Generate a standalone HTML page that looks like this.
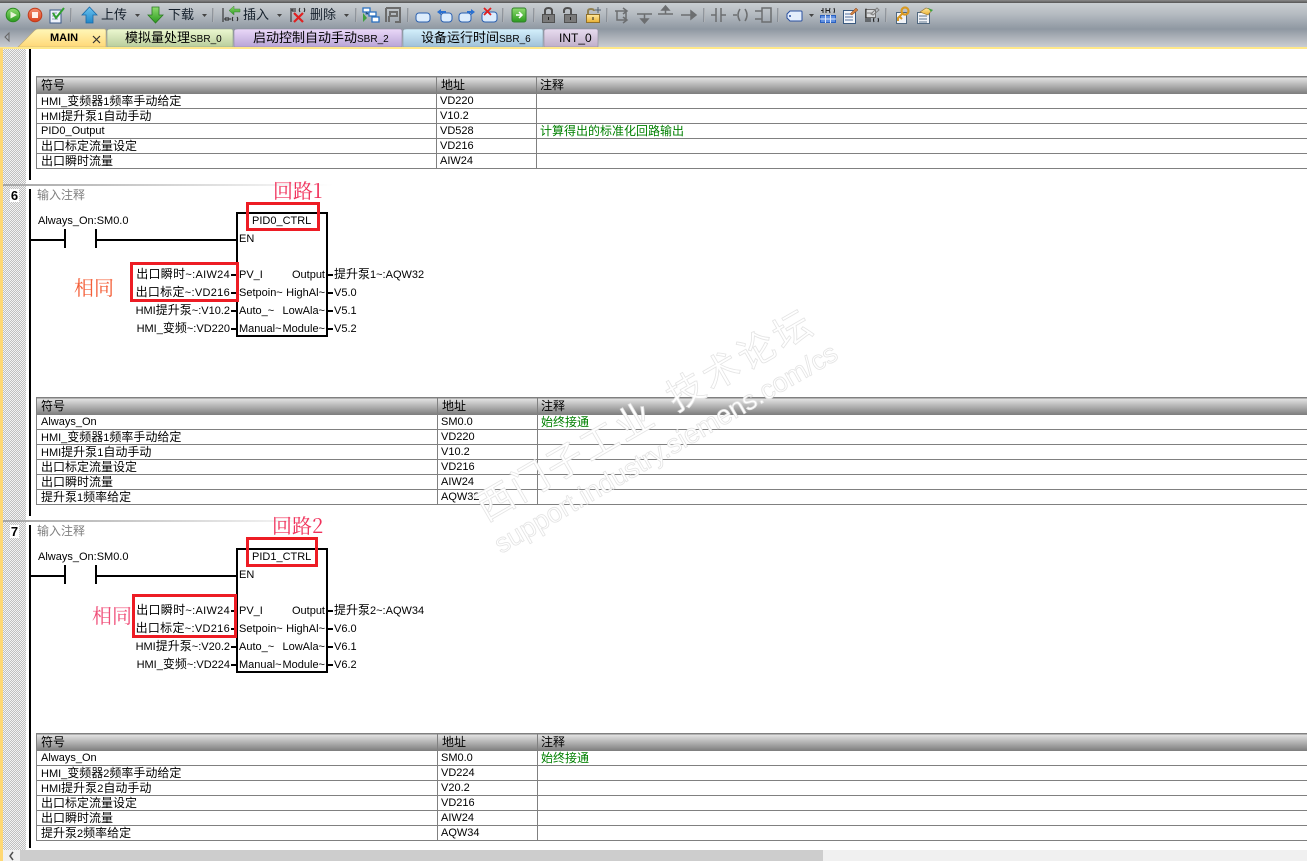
<!DOCTYPE html>
<html><head><meta charset="utf-8">
<style>
html,body{margin:0;padding:0;background:#fff}
body{width:1307px;height:861px;overflow:hidden;position:relative;font:11px/14px "Liberation Sans","WenQuanYi Zen Hei","Noto Sans CJK SC",sans-serif;color:#000}
em{font-style:normal;font-size:12px;line-height:12px;font-family:"WenQuanYi Zen Hei","Noto Sans CJK SC",sans-serif}
.a{position:absolute}
.l{position:absolute;white-space:nowrap;line-height:14px}
.r{position:absolute;white-space:nowrap;line-height:14px;right:1077px}
.o{position:absolute;white-space:nowrap;line-height:14px;right:982px}
#tb{left:0;top:0;width:1307px;height:47px;background:linear-gradient(#c9ced2 3px,#b5bbc1 14px,#8f98a2 29px,#b4b9bf 40px,#cbced2 47px)}
#tb0{left:0;top:0;width:1307px;height:3px;background:linear-gradient(#8a8a8a,#555)}
#yl{left:0;top:47px;width:1307px;height:2px;background:#ffe88a}
#ys{left:0;top:48px;width:3px;height:813px;background:#ffd873}
#ht{left:3px;top:49px;width:23px;height:801px;background:repeating-conic-gradient(#c0c0c0 0 25%,#f4f4f4 0 50%) 0 0/2px 2px}
.rail{position:absolute;left:29px;width:2px;background:#000}
.sep{position:absolute;left:3px;width:330px;height:2px;background:linear-gradient(90deg,#a6a6a6,#c8c8c8 120px,#fff)}
.num{position:absolute;left:10px;width:9px;text-align:center;font-weight:bold;font-size:13px;background:#fff;line-height:13px}
table{position:absolute;border-collapse:collapse;table-layout:fixed;width:1400px}
td,th{border:1px solid #808080;padding:0 0 0 4px;font-weight:normal;text-align:left;line-height:12px;white-space:nowrap;overflow:hidden;box-sizing:content-box;vertical-align:middle}
td{height:14px}
td+td{padding-left:3px}
th{height:16px;background:linear-gradient(#e4e4e4,#808080)}
th+th+th{padding-left:3px}
.g{color:#008000}
.b{position:absolute;background:#000}
.red{position:absolute;border:3px solid #ed1c24;box-sizing:border-box}
.big{position:absolute;white-space:nowrap;font:20px/24px "Noto Serif CJK SC","Liberation Serif",serif}
#wm{position:absolute;left:0;top:0;pointer-events:none}
</style></head><body>
<div class="a" id="tb"></div><div class="a" id="tb0"></div>

<svg class="a" style="left:0;top:0" width="1307" height="48" xmlns="http://www.w3.org/2000/svg">
<defs>
<linearGradient id="gr" x1="0" y1="0" x2="0" y2="1"><stop offset="0" stop-color="#8fdc70"/><stop offset="1" stop-color="#2a9a1e"/></linearGradient>
<linearGradient id="rd" x1="0" y1="0" x2="0" y2="1"><stop offset="0" stop-color="#f49070"/><stop offset="1" stop-color="#d8401a"/></linearGradient>
<linearGradient id="bl" x1="0" y1="0" x2="0" y2="1"><stop offset="0" stop-color="#6cc4f0"/><stop offset="1" stop-color="#1f86c8"/></linearGradient>
<linearGradient id="gd" x1="0" y1="0" x2="0" y2="1"><stop offset="0" stop-color="#ffe9a0"/><stop offset="1" stop-color="#e8b030"/></linearGradient>
<linearGradient id="t1" x1="0" y1="0" x2="0" y2="1"><stop offset="0" stop-color="#fff7b8"/><stop offset="1" stop-color="#ffd877"/></linearGradient>
<linearGradient id="t2" x1="0" y1="0" x2="0" y2="1"><stop offset="0" stop-color="#ecf8d0"/><stop offset="1" stop-color="#b9cd9c"/></linearGradient>
<linearGradient id="t3" x1="0" y1="0" x2="0" y2="1"><stop offset="0" stop-color="#ead8f8"/><stop offset="1" stop-color="#b8a4d6"/></linearGradient>
<linearGradient id="t4" x1="0" y1="0" x2="0" y2="1"><stop offset="0" stop-color="#d4f0fc"/><stop offset="1" stop-color="#a0c0d8"/></linearGradient>
<linearGradient id="t5" x1="0" y1="0" x2="0" y2="1"><stop offset="0" stop-color="#e8dcf0"/><stop offset="1" stop-color="#bfaec8"/></linearGradient>
</defs>
<!-- tabs -->
<path d="M9 33v8l-4-4z" fill="none" stroke="#666"/>
<path d="M18 47L34 31q2-2 4-2H104q2 0 2 2V47Z" fill="url(#t1)" stroke="#b8a878" stroke-width=".6"/>
<path d="M107 47V31q0-2 4-2H231q2 0 2 2V47Z" fill="url(#t2)" stroke="#8a9a8a" stroke-width=".6"/>
<path d="M234 47V31q0-2 4-2H400q2 0 2 2V47Z" fill="url(#t3)" stroke="#8a8a9a" stroke-width=".6"/>
<path d="M403 47V31q0-2 4-2H541q2 0 2 2V47Z" fill="url(#t4)" stroke="#8a9aa8" stroke-width=".6"/>
<path d="M544 47V31q0-2 4-2H596q2 0 2 2V47Z" fill="url(#t5)" stroke="#8a8a9a" stroke-width=".6"/>
<path d="M93 36l7 7M100 36l-7 7" stroke="#333" stroke-width="1.2"/>
<!-- run stop doc -->
<circle cx="13" cy="15" r="6.8" fill="url(#gr)" stroke="#2a8a20"/><path d="M10.5 11.5L17 15l-6.500 3.500z" fill="#e8f4d8"/>
<circle cx="35" cy="15" r="6.8" fill="url(#rd)" stroke="#c03a1a"/><rect x="32" y="12" width="6" height="6" fill="#fff0e8"/>
<rect x="50" y="10" width="11" height="13" fill="#eef2fa" stroke="#3c5a88"/><path d="M52 13h5M52 16h6M52 19h6" stroke="#8a9ab8"/><path d="M53 13l3 5 8-10" fill="none" stroke="#30a030" stroke-width="2"/>
<!-- separators -->
<g stroke="#f4f4f4" stroke-width="1"><path d="M71.500 8v14M213.500 8v14M356.500 8v14M408.500 8v14M503.500 8v14M534.500 8v14M607.500 8v14M704.500 8v14M778.500 8v14M886.500 8v14"/></g>
<g stroke="#6a7078" stroke-width="1"><path d="M71 8v14M213 8v14M356 8v14M408 8v14M503 8v14M534 8v14M607 8v14M704 8v14M778 8v14M886 8v14"/></g>
<!-- up/down -->
<path d="M89.500 7L97 15h-4v8h-7v-8h-4z" fill="url(#bl)" stroke="#1a6aa8" stroke-width=".8"/>
<path d="M152 7h7v8h4l-7.500 8-7.500-8h4z" fill="url(#gr)" stroke="#2a7a20" stroke-width=".8"/>
<!-- dropdown arrows -->
<g fill="#444"><path d="M135 14h5l-2.500 3zM202 14h5l-2.500 3zM277 14h5l-2.500 3zM344 14h5l-2.500 3zM809 14h5l-2.500 3z"/></g>
<!-- insert -->
<path d="M223 8v14" stroke="#222"/><path d="M226 17v4M228 17v4M226 19h-2M228 19h3M233 17q-1.500 2 0 4M237 17q1.500 2 0 4" stroke="#222" fill="none"/>
<path d="M240 9h-6V6l-5 4.500 5 4.500v-3h6z" fill="url(#gr)" stroke="#40803a" stroke-width=".5"/>
<!-- delete -->
<path d="M291 8v14" stroke="#222"/><path d="M293 8v4M295 8v4M293 10h-2M300 8q-1.500 2 0 4M304 8q1.500 2 0 4" stroke="#222" fill="none"/>
<path d="M294 13l9 9M303 13l-9 9" stroke="#e02020" stroke-width="2.200"/>
<!-- network icons -->
<path d="M363 8h7v4h-7zM369 12h7v4h-7zM372 17h7v5h-7z" fill="#fff" stroke="#2a70c0" stroke-width="1.300"/><path d="M363 13v9l4-4z" fill="#40a040"/><path d="M366 12v2h3M375 16v1" stroke="#2a70c0"/>
<path d="M386 8h14v14h-5M390 12h7v4h-7zM386 8v14M389 16v6" fill="none" stroke="#6c6c6c" stroke-width="2"/>
<!-- blue shapes -->
<rect x="416" y="13" width="14" height="9" rx="3" fill="#dcecfc" stroke="#2a60b0"/>
<rect x="441" y="13" width="11" height="9" rx="3" fill="#dcecfc" stroke="#2a60b0"/><path d="M446 11h-5V9l-4 3 4 3v-2h5z" fill="#2a70d0"/>
<rect x="459" y="13" width="12" height="9" rx="3" fill="#dcecfc" stroke="#2a60b0"/><path d="M467 11h4V9l4 3-4 3v-2h-4z" fill="#2a70d0"/>
<rect x="482" y="12" width="15" height="10" rx="3" fill="#dcecfc" stroke="#2a60b0"/><path d="M484 8l7 7M491 8l-7 7" stroke="#e02020" stroke-width="1.800"/>
<!-- green go -->
<rect x="512" y="8" width="14" height="14" rx="2" fill="url(#gr)" stroke="#30802a"/><path d="M516 15h5M519 12l3 3-3 3" stroke="#fff" stroke-width="1.500" fill="none"/>
<!-- locks -->
<g fill="#7a7a7a" stroke="#505050"><rect x="542.500" y="14.500" width="12" height="8"/><rect x="564.500" y="14.500" width="12" height="8"/></g>
<path d="M545 14v-3q0-3 3.500-3t3.500 3v3" fill="none" stroke="#505050" stroke-width="2"/>
<path d="M564 13v-2q0-3 3.500-3t3.500 2v4" fill="none" stroke="#505050" stroke-width="2"/>
<rect x="586.500" y="14.500" width="13" height="8" fill="url(#gd)" stroke="#90702a"/><path d="M588 14v-3q0-2 3-2t3 2" fill="none" stroke="#908050" stroke-width="2"/><path d="M598 7v6M595 10h6" stroke="#506070"/>
<path d="M548.500 17v3M570.500 17v3M593 17v3" stroke="#222"/>
<!-- gray ladder tools -->
<g stroke="#6c6e70" stroke-width="1.500" fill="none">
<path d="M615 11h11v9h-9v-9M623 8l4 3-4 3M623 17l4 3-4 3"/>
<path d="M637 14h15M644.500 14v6"/><path d="M641 19h7l-3.500 4z" fill="#6c6e70"/>
<path d="M658 14h15M665.500 14v-5"/><path d="M662 10h7l-3.500-4z" fill="#6c6e70"/>
<path d="M681 15h12"/><path d="M691 11l5 4-5 4z" fill="#6c6e70"/>
<path d="M711 15h5M716 8v14M721 8v14M721 15h5"/>
<path d="M733 15h4M740 9q-4 6 0 12M745 9q4 6 0 12"/>
<path d="M755 11h7M762 8h9v14h-9zM755 19h7"/>
</g>
<!-- tag -->
<path d="M790 11h11q1 0 1 1v8q0 1-1 1h-11l-3-3v-4z" fill="#e4eefc" stroke="#2a50a0"/><circle cx="790" cy="16" r="1" fill="#2a50a0"/>
<!-- table -->
<path d="M823 8v5M826 8v5M821 10.500h2M826 10.500h3M830 8q-1 2.500 0 5M834 8q1 2.500 0 5" stroke="#222" fill="none"/>
<rect x="820.500" y="15.500" width="15" height="7" fill="#6090e0" stroke="#2a60c0"/><path d="M825.500 15v8M830.500 15v8M820 19h16" stroke="#e0e8f8"/>
<!-- notes -->
<rect x="843.500" y="10.500" width="12" height="13" fill="#f4f6fa" stroke="#3a5a80"/><path d="M845 14h6M845 17h8M845 20h8" stroke="#5070a0"/><path d="M850 14l6-6 2 2-6 5z" fill="#d08040" stroke="#804020" stroke-width=".5"/>
<rect x="865.500" y="9.500" width="10" height="8" fill="#d8dadc" stroke="#707070"/><path d="M866 8v14M867 13h6M871 14l6-6 2 2-6 5z" stroke="#808080" fill="none"/><path d="M866 9v13M868 18v4M870 18v4M874 18q-1 2 0 4M878 18q1 2 0 4" stroke="#222" fill="none"/>
<rect x="896.500" y="12.500" width="10" height="11" fill="#f0f2f6" stroke="#506880"/><circle cx="905" cy="11" r="3.500" fill="none" stroke="#d89820" stroke-width="2.200"/><path d="M903 13l-5 5v3M900 17l2 2" stroke="#d89820" stroke-width="2" fill="none"/>
<rect x="917.500" y="12.500" width="12" height="11" fill="#f0f2f6" stroke="#506880"/><path d="M919 16h8M919 19h8M919 22h8" stroke="#607890"/><path d="M920 12l6-4 6 2-4 5z" fill="url(#gd)" stroke="#907030" stroke-width=".6"/><path d="M928 8l5 2-2 2z" fill="#40a040"/>
</svg>
<div class="l" style="left:101px;top:8px;font-size:13px;color:#15202c"><em style="font-size:13px">上传</em></div>
<div class="l" style="left:168px;top:8px;font-size:13px;color:#15202c"><em style="font-size:13px">下载</em></div>
<div class="l" style="left:243px;top:8px;font-size:13px;color:#15202c"><em style="font-size:13px">插入</em></div>
<div class="l" style="left:310px;top:8px;font-size:13px;color:#15202c"><em style="font-size:13px">删除</em></div>
<div class="l" style="left:50px;top:31px;font-weight:bold;font-size:11px">MAIN</div>
<div class="l" style="left:125px;top:31px;font-size:10px"><em style="font-size:13px">模拟量处理</em>SBR_0</div>
<div class="l" style="left:253px;top:31px;font-size:10px"><em style="font-size:13px">启动控制自动手动</em>SBR_2</div>
<div class="l" style="left:421px;top:31px;font-size:10px"><em style="font-size:13px">设备运行时间</em>SBR_6</div>
<div class="l" style="left:559px;top:31px;font-size:12px">INT_0</div>

<div class="a" id="yl"></div><div class="a" id="ys"></div><div class="a" id="ht"></div>

<div class="rail" style="top:49px;height:131px"></div>
<div class="sep" style="top:184px"></div>
<div class="rail" style="top:189px;height:327px"></div>
<div class="sep" style="top:520px"></div>
<div class="rail" style="top:525px;height:323px"></div>

<table style="left:36px;top:76px"><colgroup><col style="width:400px"><col style="width:100px"><col></colgroup>
<tr><th><em>符号</em></th><th><em>地址</em></th><th><em>注释</em></th></tr>
<tr><td>HMI_<em>变频器</em>1<em>频率手动给定</em></td><td>VD220</td><td></td></tr>
<tr><td>HMI<em>提升泵</em>1<em>自动手动</em></td><td>V10.2</td><td></td></tr>
<tr><td>PID0_Output</td><td>VD528</td><td class="g"><em>计算得出的标准化回路输出</em></td></tr>
<tr><td><em>出口标定流量设定</em></td><td>VD216</td><td></td></tr>
<tr><td><em>出口瞬时流量</em></td><td>AIW24</td><td></td></tr>
</table>

<!-- network 6 -->
<div class="num" style="top:189px">6</div>
<div class="l" style="left:37px;top:189px;color:#808080"><em>输入注释</em></div>
<div class="l" style="left:38px;top:214px">Always_On:SM0.0</div>
<div class="b" style="left:31px;top:239px;width:33px;height:2px"></div>
<div class="b" style="left:64px;top:229px;width:2px;height:19px"></div>
<div class="b" style="left:95px;top:229px;width:2px;height:19px"></div>
<div class="b" style="left:96px;top:239px;width:140px;height:2px"></div>
<div class="a" style="left:236px;top:212px;width:88px;height:121px;border:2px solid #000"></div>
<div class="l" style="left:252px;top:214px">PID0_CTRL</div>
<div class="l" style="left:239px;top:232px">EN</div>
<div class="b" style="left:231px;top:274px;width:5px;height:2px"></div><div class="b" style="left:231px;top:292px;width:5px;height:2px"></div><div class="b" style="left:231px;top:310px;width:5px;height:2px"></div><div class="b" style="left:231px;top:328px;width:5px;height:2px"></div>
<div class="b" style="left:328px;top:274px;width:5px;height:2px"></div><div class="b" style="left:328px;top:292px;width:5px;height:2px"></div><div class="b" style="left:328px;top:310px;width:5px;height:2px"></div><div class="b" style="left:328px;top:328px;width:5px;height:2px"></div>
<div class="r" style="top:268px;letter-spacing:.3px"><em>出口瞬时</em>~:AIW24</div>
<div class="r" style="top:286px;letter-spacing:.3px"><em>出口标定</em>~:VD216</div>
<div class="r" style="top:304px">HMI<em>提升泵</em>~:V10.2</div>
<div class="r" style="top:322px">HMI_<em>变频</em>~:VD220</div>
<div class="l" style="left:239px;top:268px">PV_I</div>
<div class="l" style="left:239px;top:286px">Setpoin~</div>
<div class="l" style="left:239px;top:304px">Auto_~</div>
<div class="l" style="left:239px;top:322px">Manual~</div>
<div class="o" style="top:268px">Output</div>
<div class="o" style="top:286px">HighAl~</div>
<div class="o" style="top:304px">LowAla~</div>
<div class="o" style="top:322px">Module~</div>
<div class="l" style="left:334px;top:268px"><em>提升泵</em>1~:AQW32</div>
<div class="l" style="left:334px;top:286px">V5.0</div>
<div class="l" style="left:334px;top:304px">V5.1</div>
<div class="l" style="left:334px;top:322px">V5.2</div>
<div class="red" style="left:246px;top:202px;width:74px;height:29px"></div>
<div class="red" style="left:130px;top:262px;width:109px;height:40px"></div>
<div class="big" style="left:273px;top:178px;color:#f0305a">回路1</div>
<div class="big" style="left:74px;top:275px;color:#f4603a">相同</div>

<table style="left:36px;top:397px"><colgroup><col style="width:401px"><col style="width:100px"><col></colgroup>
<tr><th><em>符号</em></th><th><em>地址</em></th><th><em>注释</em></th></tr>
<tr><td>Always_On</td><td>SM0.0</td><td class="g"><em>始终接通</em></td></tr>
<tr><td>HMI_<em>变频器</em>1<em>频率手动给定</em></td><td>VD220</td><td></td></tr>
<tr><td>HMI<em>提升泵</em>1<em>自动手动</em></td><td>V10.2</td><td></td></tr>
<tr><td><em>出口标定流量设定</em></td><td>VD216</td><td></td></tr>
<tr><td><em>出口瞬时流量</em></td><td>AIW24</td><td></td></tr>
<tr><td><em>提升泵</em>1<em>频率给定</em></td><td>AQW32</td><td></td></tr>
</table>

<!-- network 7 -->
<div class="num" style="top:525px">7</div>
<div class="l" style="left:37px;top:525px;color:#808080"><em>输入注释</em></div>
<div class="l" style="left:38px;top:550px">Always_On:SM0.0</div>
<div class="b" style="left:31px;top:575px;width:33px;height:2px"></div>
<div class="b" style="left:64px;top:565px;width:2px;height:19px"></div>
<div class="b" style="left:95px;top:565px;width:2px;height:19px"></div>
<div class="b" style="left:96px;top:575px;width:140px;height:2px"></div>
<div class="a" style="left:236px;top:548px;width:88px;height:121px;border:2px solid #000"></div>
<div class="l" style="left:252px;top:550px">PID1_CTRL</div>
<div class="l" style="left:239px;top:568px">EN</div>
<div class="b" style="left:231px;top:610px;width:5px;height:2px"></div><div class="b" style="left:231px;top:628px;width:5px;height:2px"></div><div class="b" style="left:231px;top:646px;width:5px;height:2px"></div><div class="b" style="left:231px;top:664px;width:5px;height:2px"></div>
<div class="b" style="left:328px;top:610px;width:5px;height:2px"></div><div class="b" style="left:328px;top:628px;width:5px;height:2px"></div><div class="b" style="left:328px;top:646px;width:5px;height:2px"></div><div class="b" style="left:328px;top:664px;width:5px;height:2px"></div>
<div class="r" style="top:604px;letter-spacing:.3px"><em>出口瞬时</em>~:AIW24</div>
<div class="r" style="top:622px;letter-spacing:.3px"><em>出口标定</em>~:VD216</div>
<div class="r" style="top:640px">HMI<em>提升泵</em>~:V20.2</div>
<div class="r" style="top:658px">HMI_<em>变频</em>~:VD224</div>
<div class="l" style="left:239px;top:604px">PV_I</div>
<div class="l" style="left:239px;top:622px">Setpoin~</div>
<div class="l" style="left:239px;top:640px">Auto_~</div>
<div class="l" style="left:239px;top:658px">Manual~</div>
<div class="o" style="top:604px">Output</div>
<div class="o" style="top:622px">HighAl~</div>
<div class="o" style="top:640px">LowAla~</div>
<div class="o" style="top:658px">Module~</div>
<div class="l" style="left:334px;top:604px"><em>提升泵</em>2~:AQW34</div>
<div class="l" style="left:334px;top:622px">V6.0</div>
<div class="l" style="left:334px;top:640px">V6.1</div>
<div class="l" style="left:334px;top:658px">V6.2</div>
<div class="red" style="left:246px;top:537px;width:72px;height:30px"></div>
<div class="red" style="left:132px;top:594px;width:105px;height:44px"></div>
<div class="big" style="left:272px;top:513px;color:#f0305a">回路2</div>
<div class="big" style="left:92px;top:603px;color:#f0507a">相同</div>

<table style="left:36px;top:733px"><colgroup><col style="width:401px"><col style="width:100px"><col></colgroup>
<tr><th><em>符号</em></th><th><em>地址</em></th><th><em>注释</em></th></tr>
<tr><td>Always_On</td><td>SM0.0</td><td class="g"><em>始终接通</em></td></tr>
<tr><td>HMI_<em>变频器</em>2<em>频率手动给定</em></td><td>VD224</td><td></td></tr>
<tr><td>HMI<em>提升泵</em>2<em>自动手动</em></td><td>V20.2</td><td></td></tr>
<tr><td><em>出口标定流量设定</em></td><td>VD216</td><td></td></tr>
<tr><td><em>出口瞬时流量</em></td><td>AIW24</td><td></td></tr>
<tr><td><em>提升泵</em>2<em>频率给定</em></td><td>AQW34</td><td></td></tr>
</table>

<!-- scrollbar -->
<div class="a" style="left:3px;top:850px;width:1304px;height:11px;background:#f0f0f0"></div>
<div class="a" style="left:20px;top:850px;width:803px;height:11px;background:#cdcdcd"></div>
<svg class="a" style="left:8px;top:851px" width="8" height="10"><path d="M5 1L2 5l3 4" fill="none" stroke="#505050" stroke-width="1.500"/></svg>

<!-- watermark -->
<svg id="wm" width="1307" height="861" xmlns="http://www.w3.org/2000/svg">
<g fill="#fff" stroke="#e4e4e4" stroke-width=".8">
<text transform="translate(486 522) rotate(-30)" font-family="'Noto Sans CJK SC',sans-serif" font-size="37" letter-spacing="3">西门子工业</text>
<text transform="translate(676 412) rotate(-30)" font-family="'Noto Sans CJK SC',sans-serif" font-size="37" letter-spacing="4">技术论坛</text>
<text transform="translate(501 554) rotate(-30)" font-family="'Liberation Sans',sans-serif" font-size="27">support.industry.siemens.com/cs</text>
</g>
</svg>
</body></html>
